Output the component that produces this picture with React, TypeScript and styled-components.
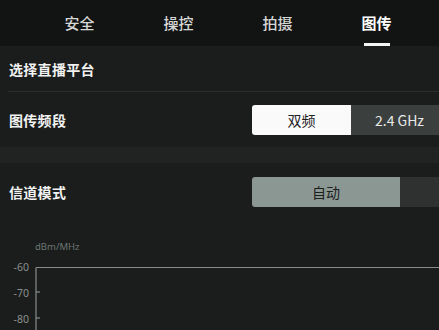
import React from "react";
import styled, { createGlobalStyle } from "styled-components";

const GlobalStyle = createGlobalStyle`
  html, body {
    margin: 0;
    padding: 0;
    background: #1a1d1c;
    overflow: hidden;
    font-family: "Noto Sans CJK SC", "Noto Sans", sans-serif;
  }
  * { box-sizing: border-box; }
`;

const Page = styled.div`
  width: 439px;
  height: 330px;
  display: flex;
  flex-direction: column;
  overflow: hidden;
  background: #1a1d1c;
`;

const TabBar = styled.nav`
  height: 46px;
  flex-shrink: 0;
  background: #121413;
  display: grid;
  grid-template-columns: repeat(4, 99px);
  padding-left: 30px;
`;

const Tab = styled.div<{ $active?: boolean }>`
  position: relative;
  display: flex;
  align-items: center;
  justify-content: center;
  padding-bottom: 1px;
  font-size: 15px;
  font-weight: ${(p) => (p.$active ? 700 : 500)};
  color: ${(p) => (p.$active ? "#ffffff" : "#d6d8d7")};
  &::after {
    content: "";
    display: ${(p) => (p.$active ? "block" : "none")};
    position: absolute;
    left: 50%;
    bottom: 0;
    width: 26px;
    height: 3px;
    margin-left: -13px;
    background: #f4f4f4;
  }
`;

const Row = styled.div<{ $h: number }>`
  height: ${(p) => p.$h}px;
  flex-shrink: 0;
  display: grid;
  grid-template-columns: 243px auto;
  align-items: center;
  padding-left: 9px;
  overflow: hidden;
`;

const Label = styled.div`
  font-size: 14px;
  font-weight: 700;
  color: #f1f2f1;
  letter-spacing: 0.3px;
`;

const Divider = styled.div`
  height: 1px;
  margin-left: 8px;
  background: #2a2e2c;
  flex-shrink: 0;
`;

const Band = styled.div`
  height: 16px;
  flex-shrink: 0;
  background: #202322;
`;

const Segmented = styled.div`
  display: flex;
  height: 30px;
  border-radius: 3px 0 0 3px;
  overflow: hidden;
`;

const Segment = styled.div<{ $w: number; $bg: string; $fg: string }>`
  width: ${(p) => p.$w}px;
  flex-shrink: 0;
  display: flex;
  align-items: center;
  justify-content: center;
  background: ${(p) => p.$bg};
  color: ${(p) => p.$fg};
  font-size: 14px;
  font-family: "Noto Sans CJK SC", "Noto Sans", sans-serif;
`;

const ChartArea = styled.div`
  flex: 1;
`;

const ChartSvg = styled.svg`
  display: block;
  width: 439px;
  height: 110px;
`;

export default function App() {
  return (
    <Page>
      <GlobalStyle />
      <TabBar>
        <Tab>安全</Tab>
        <Tab>操控</Tab>
        <Tab>拍摄</Tab>
        <Tab $active>图传</Tab>
      </TabBar>
      <Row $h={45}>
        <Label>选择直播平台</Label>
      </Row>
      <Divider />
      <Row $h={55}>
        <Label>图传频段</Label>
        <Segmented>
          <Segment $w={99} $bg="#fafafa" $fg="#1e201f">双频</Segment>
          <Segment $w={97} $bg="#3b403e" $fg="#e8e9e8">2.4 GHz</Segment>
        </Segmented>
      </Row>
      <Band />
      <Row $h={57}>
        <Label>信道模式</Label>
        <Segmented>
          <Segment $w={148} $bg="#8b9792" $fg="#1c1f1e">自动</Segment>
          <Segment $w={148} $bg="#2e3130" $fg="#c8cac9" />
        </Segmented>
      </Row>
      <ChartArea>
        <ChartSvg viewBox="0 0 439 110">
          <text x="35" y="30" fontSize="9.5" fill="#6b7571" fontFamily="Noto Sans, sans-serif">
            dBm/MHz
          </text>
          <g fontSize="10.5" fill="#8a8f8d" fontFamily="Noto Sans, sans-serif" textAnchor="end">
            <text x="29" y="50.5">-60</text>
            <text x="29" y="76.5">-70</text>
            <text x="29" y="102.5">-80</text>
          </g>
          <g stroke="#878c8a" strokeWidth="1.2" fill="none">
            <path d="M36 47.5 H439" />
            <path d="M36 47.5 V110" />
            <path d="M36 72 H40" />
            <path d="M36 98 H40" />
          </g>
        </ChartSvg>
      </ChartArea>
    </Page>
  );
}
